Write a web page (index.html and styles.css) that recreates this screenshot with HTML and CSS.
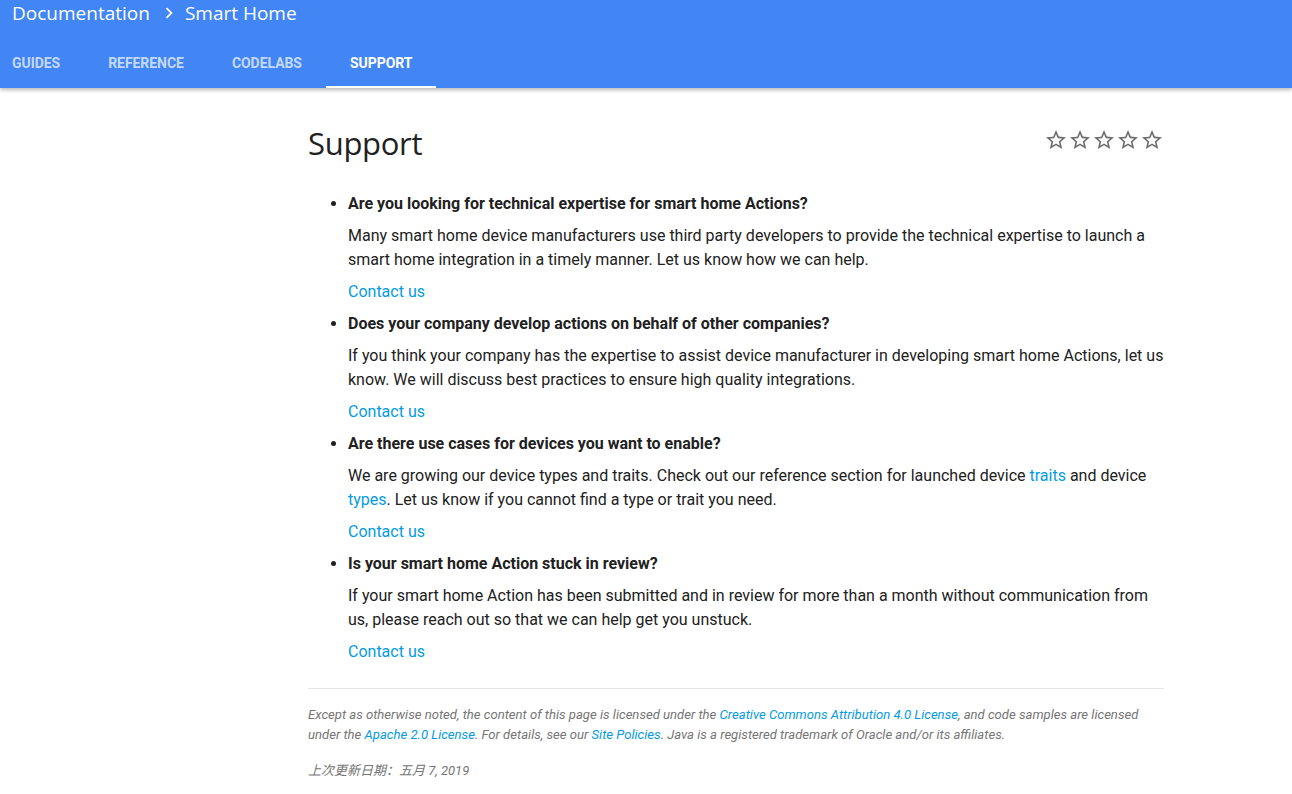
FILE: index.html
```html
<!DOCTYPE html>
<html lang="en">
<head>
<meta charset="utf-8">
<title>Support | Smart Home</title>
<link rel="stylesheet" href="styles.css">
</head>
<body>
<header class="header">
  <div class="crumbs">
    <span class="crumb">Documentation</span>
    <svg class="chev" viewBox="0 0 24 24" width="22" height="22"><path d="M8.59 16.59L13.17 12 8.59 7.41 10 6l6 6-6 6z" fill="#fff"/></svg>
    <span class="crumb">Smart Home</span>
  </div>
  <nav class="tabs">
    <a class="tab">Guides</a>
    <a class="tab">Reference</a>
    <a class="tab">Codelabs</a>
    <a class="tab active">Support</a>
  </nav>
</header>
<main class="content">
  <div class="title-row">
    <h1 class="title">Support</h1>
    <div class="stars">
      <svg viewBox="0 0 24 24" width="24" height="24"><path d="M22 9.24l-7.19-.62L12 2 9.19 8.63 2 9.24l5.46 4.73L5.82 21 12 17.27 18.18 21l-1.63-7.03L22 9.24zM12 15.4l-3.76 2.27 1-4.28-3.32-2.88 4.38-.38L12 6.1l1.71 4.04 4.38.38-3.32 2.88 1 4.28L12 15.4z"/></svg>
      <svg viewBox="0 0 24 24" width="24" height="24"><path d="M22 9.24l-7.19-.62L12 2 9.19 8.63 2 9.24l5.46 4.73L5.82 21 12 17.27 18.18 21l-1.63-7.03L22 9.24zM12 15.4l-3.76 2.27 1-4.28-3.32-2.88 4.38-.38L12 6.1l1.71 4.04 4.38.38-3.32 2.88 1 4.28L12 15.4z"/></svg>
      <svg viewBox="0 0 24 24" width="24" height="24"><path d="M22 9.24l-7.19-.62L12 2 9.19 8.63 2 9.24l5.46 4.73L5.82 21 12 17.27 18.18 21l-1.63-7.03L22 9.24zM12 15.4l-3.76 2.27 1-4.28-3.32-2.88 4.38-.38L12 6.1l1.71 4.04 4.38.38-3.32 2.88 1 4.28L12 15.4z"/></svg>
      <svg viewBox="0 0 24 24" width="24" height="24"><path d="M22 9.24l-7.19-.62L12 2 9.19 8.63 2 9.24l5.46 4.73L5.82 21 12 17.27 18.18 21l-1.63-7.03L22 9.24zM12 15.4l-3.76 2.27 1-4.28-3.32-2.88 4.38-.38L12 6.1l1.71 4.04 4.38.38-3.32 2.88 1 4.28L12 15.4z"/></svg>
      <svg viewBox="0 0 24 24" width="24" height="24"><path d="M22 9.24l-7.19-.62L12 2 9.19 8.63 2 9.24l5.46 4.73L5.82 21 12 17.27 18.18 21l-1.63-7.03L22 9.24zM12 15.4l-3.76 2.27 1-4.28-3.32-2.88 4.38-.38L12 6.1l1.71 4.04 4.38.38-3.32 2.88 1 4.28L12 15.4z"/></svg>
    </div>
  </div>
  <ul class="list">
    <li>
      <p class="q">Are you looking for technical expertise for smart home Actions?</p>
      <p>Many smart home device manufacturers use third party developers to provide the technical expertise to launch a smart home integration in a timely manner. Let us know how we can help.</p>
      <p><a class="link">Contact us</a></p>
    </li>
    <li>
      <p class="q">Does your company develop actions on behalf of other companies?</p>
      <p>If you think your company has the expertise to assist device manufacturer in developing smart home Actions, let us know. We will discuss best practices to ensure high quality integrations.</p>
      <p><a class="link">Contact us</a></p>
    </li>
    <li>
      <p class="q">Are there use cases for devices you want to enable?</p>
      <p>We are growing our device types and traits. Check out our reference section for launched device <a class="link">traits</a> and device <a class="link">types</a>. Let us know if you cannot find a type or trait you need.</p>
      <p><a class="link">Contact us</a></p>
    </li>
    <li>
      <p class="q">Is your smart home Action stuck in review?</p>
      <p>If your smart home Action has been submitted and in review for more than a month without communication from us, please reach out so that we can help get you unstuck.</p>
      <p><a class="link">Contact us</a></p>
    </li>
  </ul>
  <footer class="foot">
    <p class="license">Except as otherwise noted, the content of this page is licensed under the <a class="link">Creative Commons Attribution 4.0 License</a>, and code samples are licensed under the <a class="link">Apache 2.0 License</a>. For details, see our <a class="link">Site Policies</a>. Java is a registered trademark of Oracle and/or its affiliates.</p>
    <p class="updated">上次更新日期：五月 7, 2019</p>
  </footer>
</main>
</body>
</html>
```
FILE: styles.css
```css
* { box-sizing: border-box; }
html, body { margin: 0; padding: 0; background: #fff; }
body {
  font-family: Roboto, "Noto Sans", Arial, sans-serif;
  color: #212121;
  font-size: 16px;
  line-height: 24px;
}
.header {
  background: #4285f4;
  color: #fff;
  box-shadow: 0 2px 4px rgba(0,0,0,0.28);
  position: relative;
}
.crumbs {
  height: 40px;
  padding-left: 12px;
  display: flex;
  align-items: flex-start;
}
.crumb {
  font-family: "Open Sans", Lato, sans-serif;
  font-size: 19px;
  line-height: 26px;
}
.chev { margin: 2px 5px 0 8px; }
.tabs {
  display: flex;
  height: 48px;
  margin-left: -12px;
}
.tab {
  display: flex;
  align-items: center;
  padding: 0 24px;
  font-size: 14px;
  font-weight: 700;
  text-transform: uppercase;
  color: rgba(255,255,255,0.7);
  border-bottom: 2px solid transparent;
  letter-spacing: -0.05px;
}
.tab.active { color: #fff; border-bottom-color: #fff; }
.content {
  margin-left: 308px;
  width: 856px;
  padding-top: 36px;
  padding-bottom: 20px;
}
.title-row {
  display: flex;
  justify-content: space-between;
  align-items: flex-start;
}
.title {
  margin: 0;
  font-family: "Open Sans", Lato, sans-serif;
  font-weight: 400;
  font-size: 31px;
  line-height: 40px;
  color: #212121;
  letter-spacing: -0.3px;
  position: relative;
  top: -1px;
}
.stars { display: flex; margin-top: 4px; }
.stars svg { fill: #6d6d6d; display: block; }
.list {
  margin: 28px 0 0 0;
  padding-left: 40px;
}
.list li { margin: 0; }
.list p { margin: 0 0 8px 0; }
.list .q { font-weight: 700; }
.link { color: #039be5; text-decoration: none; }
.foot {
  margin-top: 24px;
  border-top: 1px solid #e4e4e4;
  padding-top: 16px;
  font-size: 13.1px;
  line-height: 20px;
  font-style: italic;
  color: #757575;
}
.foot p { margin: 0; }
.license { margin-bottom: 16px !important; }
.updated { font-family: Roboto, "Noto Sans CJK SC", sans-serif; font-size: 13px; }
```
